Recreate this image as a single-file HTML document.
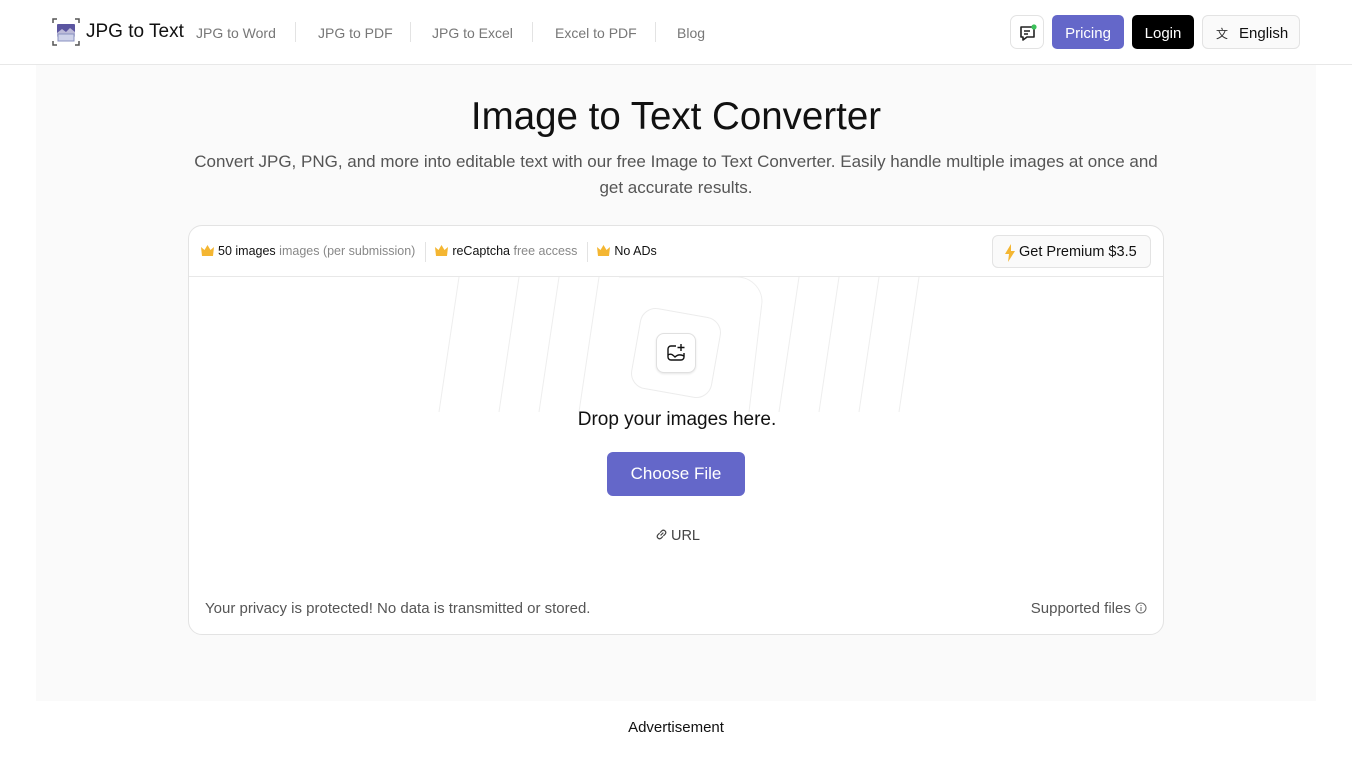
<!DOCTYPE html>
<html><head><meta charset="utf-8"><style>
*{box-sizing:border-box;margin:0;padding:0}
body{width:1352px;height:760px;background:#fff;font-family:"Liberation Sans",sans-serif;color:#111;position:relative;overflow:hidden}
.hdr{position:absolute;left:0;top:0;width:1352px;height:65px;border-bottom:1px solid #e8e8e8;background:#fff}
.abs{position:absolute}
.nav{position:absolute;top:25px;font-size:14px;color:#777}
.sep{position:absolute;top:22px;width:1px;height:20px;background:#e3e3e3}
.band{position:absolute;left:36px;top:65px;width:1280px;height:636px;background:#fafafa}
.card{position:absolute;left:188px;top:225px;width:976px;height:410px;background:#fff;border:1px solid #e3e3e3;border-radius:14px;overflow:hidden}
.crown{display:inline-block;width:13px;height:11px;vertical-align:-1px;margin-right:4px}
</style></head><body>
<div class="hdr">
 <svg class="abs" style="left:52px;top:18px" width="28" height="28" viewBox="0 0 28 28">
  <path d="M1 5V1h4M23 1h4v4M1 23v4h4M27 23v4h-4" stroke="#555" stroke-width="1.5" fill="none"/>
  <rect x="5" y="6" width="18" height="13" rx="1" fill="#5b55a0"/>
  <path d="M5 15l5-4 4 3 4-4 5 4v5H5z" fill="#fff" opacity=".6"/>
  <rect x="6" y="16" width="16" height="7" fill="#cfd3ea" stroke="#8890c0"/>
 </svg>
 <div class="abs" style="left:86px;top:21px;font-size:19px;color:#111">JPG to Text</div>
 <div class="nav" style="left:196px">JPG to Word</div><div class="sep" style="left:295px"></div>
 <div class="nav" style="left:318px">JPG to PDF</div><div class="sep" style="left:410px"></div>
 <div class="nav" style="left:432px">JPG to Excel</div><div class="sep" style="left:532px"></div>
 <div class="nav" style="left:555px">Excel to PDF</div><div class="sep" style="left:655px"></div>
 <div class="nav" style="left:677px">Blog</div>
 <div class="abs" style="left:1010px;top:15px;width:34px;height:34px;border:1px solid #e3e3e3;border-radius:7px">
  <svg width="34" height="34" viewBox="0 0 34 34"><path d="M10 11h13v10h-7l-4 3v-3h-2z" fill="none" stroke="#222" stroke-width="1.6" stroke-linejoin="round"/><path d="M13 15h6M13 18h4" stroke="#222" stroke-width="1.5"/><circle cx="23" cy="11" r="2.6" fill="#3cc15a"/></svg>
 </div>
 <div class="abs" style="left:1052px;top:15px;width:72px;height:34px;background:#6467c9;border-radius:5px;color:#fff;font-size:15px;text-align:center;line-height:34px;padding-top:2px">Pricing</div>
 <div class="abs" style="left:1132px;top:15px;width:62px;height:34px;background:#000;border-radius:5px;color:#fff;font-size:15px;text-align:center;line-height:34px;padding-top:2px">Login</div>
 <div class="abs" style="left:1202px;top:15px;width:98px;height:34px;background:#fafafa;border:1px solid #e3e3e3;border-radius:6px;font-size:15px;line-height:32px;padding-top:2px;padding-left:36px">English</div>
 <div class="abs" style="left:1216px;top:25px;font-size:12px;color:#333;font-family:'Noto Sans CJK SC',sans-serif">文</div>
</div>
<div class="band"></div>
<div class="abs" style="left:0;width:1352px;top:95px;text-align:center;font-size:38.5px;color:#111">Image to Text Converter</div>
<div class="abs" style="left:186px;width:980px;top:149px;text-align:center;font-size:17px;line-height:26px;color:#555">Convert JPG, PNG, and more into editable text with our free Image to Text Converter. Easily handle multiple images at once and get accurate results.</div>
<div class="card">
 <div class="abs" style="left:0;top:0;width:976px;height:51px;border-bottom:1px solid #e8e8e8;font-size:12.5px;line-height:50px;padding-left:12px;white-space:nowrap">
  <svg class="crown" viewBox="0 0 13 11"><path d="M0 2l3.5 3L6.5 0l3 5L13 2l-1 9H1z" fill="#f4b632"/></svg><span style="color:#111">50 images</span> <span style="color:#888">images (per submission)</span>
  <span style="display:inline-block;width:1px;height:20px;background:#e3e3e3;vertical-align:middle;margin:0 6px"></span>
  <svg class="crown" viewBox="0 0 13 11"><path d="M0 2l3.5 3L6.5 0l3 5L13 2l-1 9H1z" fill="#f4b632"/></svg><span>reCaptcha</span> <span style="color:#888">free access</span>
  <span style="display:inline-block;width:1px;height:20px;background:#e3e3e3;vertical-align:middle;margin:0 6px"></span>
  <svg class="crown" viewBox="0 0 13 11"><path d="M0 2l3.5 3L6.5 0l3 5L13 2l-1 9H1z" fill="#f4b632"/></svg><span>No ADs</span>
 </div>
 <div class="abs" style="left:803px;top:9px;width:159px;height:33px;border:1px solid #e3e3e3;background:#fafafa;border-radius:6px;font-size:14.5px;line-height:33px;padding-left:26px">Get Premium $3.5</div>
 <svg class="abs" style="left:815px;top:18px" width="12" height="18" viewBox="0 0 12 18"><path d="M7 0L1 10h4l-1 8 7-11H7z" fill="#f4b632"/></svg>
 <svg class="abs" style="left:230px;top:51px" width="520" height="135" viewBox="0 0 520 135">
  <g stroke="#eee" stroke-width="1" fill="none">
   <path d="M20 135L40 0M80 135L100 0M120 135L140 0M160 135L180 0M360 135L380 0M400 135L420 0M440 135L460 0M480 135L500 0"/>
   <path d="M200 0h118a25 25 0 0 1 25 25L330 135" />
  </g>
 </svg>
 <div class="abs" style="left:446px;top:86px;width:82px;height:82px;border:1px solid #ececec;border-radius:16px;transform:rotate(10deg);background:#fff"></div>
 <div class="abs" style="left:467px;top:107px;width:40px;height:40px;border:1px solid #e0e0e0;border-radius:8px;background:#fff;box-shadow:0 1px 2px rgba(0,0,0,.1)">
  <svg width="40" height="40" viewBox="0 0 40 40"><path d="M19 12h-5a3 3 0 0 0-3 3v8a3 3 0 0 0 3 3h10a3 3 0 0 0 3-3v-4" fill="none" stroke="#111" stroke-width="1.4"/><path d="M11 21c3-2 5 0 7 2 2-2 5-3 9-1" fill="none" stroke="#111" stroke-width="1.4"/><path d="M24 10v7M20.5 13.5h7" stroke="#111" stroke-width="1.4"/></svg>
 </div>
 <div class="abs" style="left:0;width:976px;top:183px;text-align:center;font-size:19px;color:#111">Drop your images here.</div>
 <div class="abs" style="left:418px;top:226px;width:138px;height:44px;background:#6467c9;border-radius:6px;color:#fff;font-size:17px;text-align:center;line-height:44px">Choose File</div>
 <div class="abs" style="left:0;width:976px;top:301px;text-align:center;font-size:14.5px;color:#444"><svg width="15" height="15" viewBox="0 0 16 16" style="vertical-align:-2px;margin-right:2px"><path d="M7 9l3-3M6 6.5L4 8.5a2.5 2.5 0 0 0 3.5 3.5L9.5 10M10 9.5L12 7.5A2.5 2.5 0 0 0 8.5 4L6.5 6" fill="none" stroke="#444" stroke-width="1.3"/></svg>URL</div>
 <div class="abs" style="left:16px;top:374px;font-size:15px;color:#555">Your privacy is protected! No data is transmitted or stored.</div>
 <div class="abs" style="right:16px;top:374px;font-size:15px;color:#555">Supported files <svg width="12" height="12" viewBox="0 0 12 12" style="vertical-align:-1px"><circle cx="6" cy="6" r="5" fill="none" stroke="#666"/><path d="M6 5v4M6 3v1" stroke="#666"/></svg></div>
</div>
<div class="abs" style="left:0;width:1352px;top:719px;text-align:center;font-size:15px;color:#111">Advertisement</div>
</body></html>
